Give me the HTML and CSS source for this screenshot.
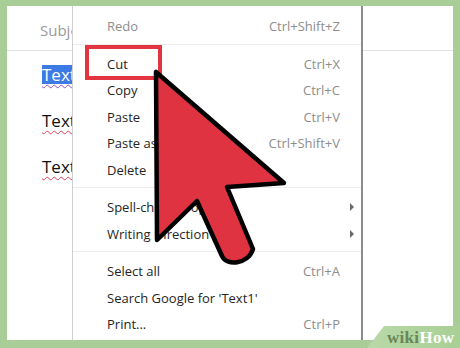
FILE: index.html
```html
<!DOCTYPE html>
<html>
<head>
<meta charset="utf-8">
<link rel="stylesheet" href="styles.css">
</head>
<body>
<div class="frame">
  <div class="doc">
    <div class="doc-head"><span class="subj">Subject</span></div>
    <div class="doc-rows">
      <div class="doc-row"><span class="word sel">Text1</span></div>
      <div class="doc-row"><span class="word">Text2</span></div>
      <div class="doc-row"><span class="word">Text3</span></div>
    </div>
  </div>
  <div class="menu">
    <div class="item disabled"><span class="label">Redo</span><span class="key">Ctrl+Shift+Z</span></div>
    <div class="sep"></div>
    <div class="item"><span class="label">Cut</span><span class="key">Ctrl+X</span></div>
    <div class="item"><span class="label">Copy</span><span class="key">Ctrl+C</span></div>
    <div class="item"><span class="label">Paste</span><span class="key">Ctrl+V</span></div>
    <div class="item"><span class="label">Paste as plain text</span><span class="key">Ctrl+Shift+V</span></div>
    <div class="item"><span class="label">Delete</span></div>
    <div class="sep"></div>
    <div class="item"><span class="label">Spell-checker options</span><span class="sub"></span></div>
    <div class="item"><span class="label">Writing Direction</span><span class="sub"></span></div>
    <div class="sep"></div>
    <div class="item"><span class="label">Select all</span><span class="key">Ctrl+A</span></div>
    <div class="item"><span class="label">Search Google for 'Text1'</span></div>
    <div class="item"><span class="label">Print...</span><span class="key">Ctrl+P</span></div>
  </div>
  <div class="side"><div class="side-head"></div></div>
</div>
<div class="cut-box"></div>
<svg class="pointer" width="460" height="348" viewBox="0 0 460 348">
  <path d="M156 72 L157 240 L197 201 L222 256 C226 266 248 265 253 249 L227 187 L284 183 Z" fill="#df3341" stroke="#000" stroke-width="4.5" stroke-linejoin="round"/>
</svg>
<div class="logo"><span class="wiki">wiki</span><span class="how">How</span></div>
</body>
</html>
```

FILE: styles.css
```css
html, body {
  margin: 0;
  padding: 0;
}
body {
  width: 460px;
  height: 348px;
  background: #a9cd96;
  position: relative;
  overflow: hidden;
  font-family: "Open Sans", "Noto Sans", sans-serif;
}
.frame {
  position: absolute;
  left: 7px;
  top: 6px;
  width: 446px;
  height: 334px;
  background: #fff;
  display: flex;
}
.doc {
  width: 65px;
  overflow: hidden;
  flex: none;
}
.doc-head {
  height: 44px;
  border-bottom: 1px solid #e2e2e2;
  box-sizing: content-box;
  padding-left: 33px;
  white-space: nowrap;
}
.subj {
  display: inline-block;
  padding-top: 14px;
  font-size: 15px;
  line-height: 20px;
  color: #9a9a9a;
}
.doc-rows {
  display: flex;
  flex-direction: column;
  gap: 27px;
  padding-top: 13px;
  padding-left: 35px;
}
.doc-row {
  height: 19px;
  white-space: nowrap;
}
.word {
  display: inline-block;
  font-size: 17px;
  line-height: 19px;
  height: 19px;
  color: #111;
  text-decoration: underline wavy #e0405a;
  text-decoration-thickness: 1px;
  text-underline-offset: 3px;
}
.word.sel {
  background: #3c7be4;
  color: #fff;
  text-decoration-color: #a050c0;
}
.menu {
  width: 288px;
  flex: none;
  border-left: 1px solid #cfcfcf;
  border-right: 2px solid #8c8c8c;
  padding-top: 7px;
  font-size: 13px;
  color: #252525;
}
.item {
  height: 26.5px;
  line-height: 26.5px;
  display: flex;
  align-items: center;
  padding-left: 34px;
  padding-right: 21px;
  white-space: nowrap;
}
.label {
  flex: 1;
}
.key {
  color: #8d8d8d;
}
.disabled .label {
  color: #8d8d8d;
}
.sub {
  width: 0;
  height: 0;
  border-top: 4px solid transparent;
  border-bottom: 4px solid transparent;
  border-left: 4px solid #6a6a6a;
  margin-right: -14px;
}
.sep {
  height: 1px;
  background: #ececec;
  margin: 4px 0 6px 0;
}
.side {
  flex: 1;
}
.side-head {
  height: 44px;
  border-bottom: 1px solid #e2e2e2;
}
.cut-box {
  position: absolute;
  left: 85px;
  top: 45px;
  width: 69px;
  height: 27px;
  border: 4px solid #e3353f;
}
.pointer {
  position: absolute;
  left: 0;
  top: 0;
}
.logo {
  position: absolute;
  left: 367px;
  top: 326px;
  width: 93px;
  height: 22px;
  background: linear-gradient(90deg, #b9d9a8, #a8cf95);
  clip-path: polygon(17px 0, 100% 0, 100% 100%, 0 100%);
  box-sizing: border-box;
  padding-left: 20px;
  font-family: "Liberation Serif", serif;
  font-weight: bold;
  font-size: 17px;
  line-height: 24px;
  letter-spacing: 0.3px;
}
.wiki {
  color: #67875a;
}
.how {
  color: #fff;
}
```
